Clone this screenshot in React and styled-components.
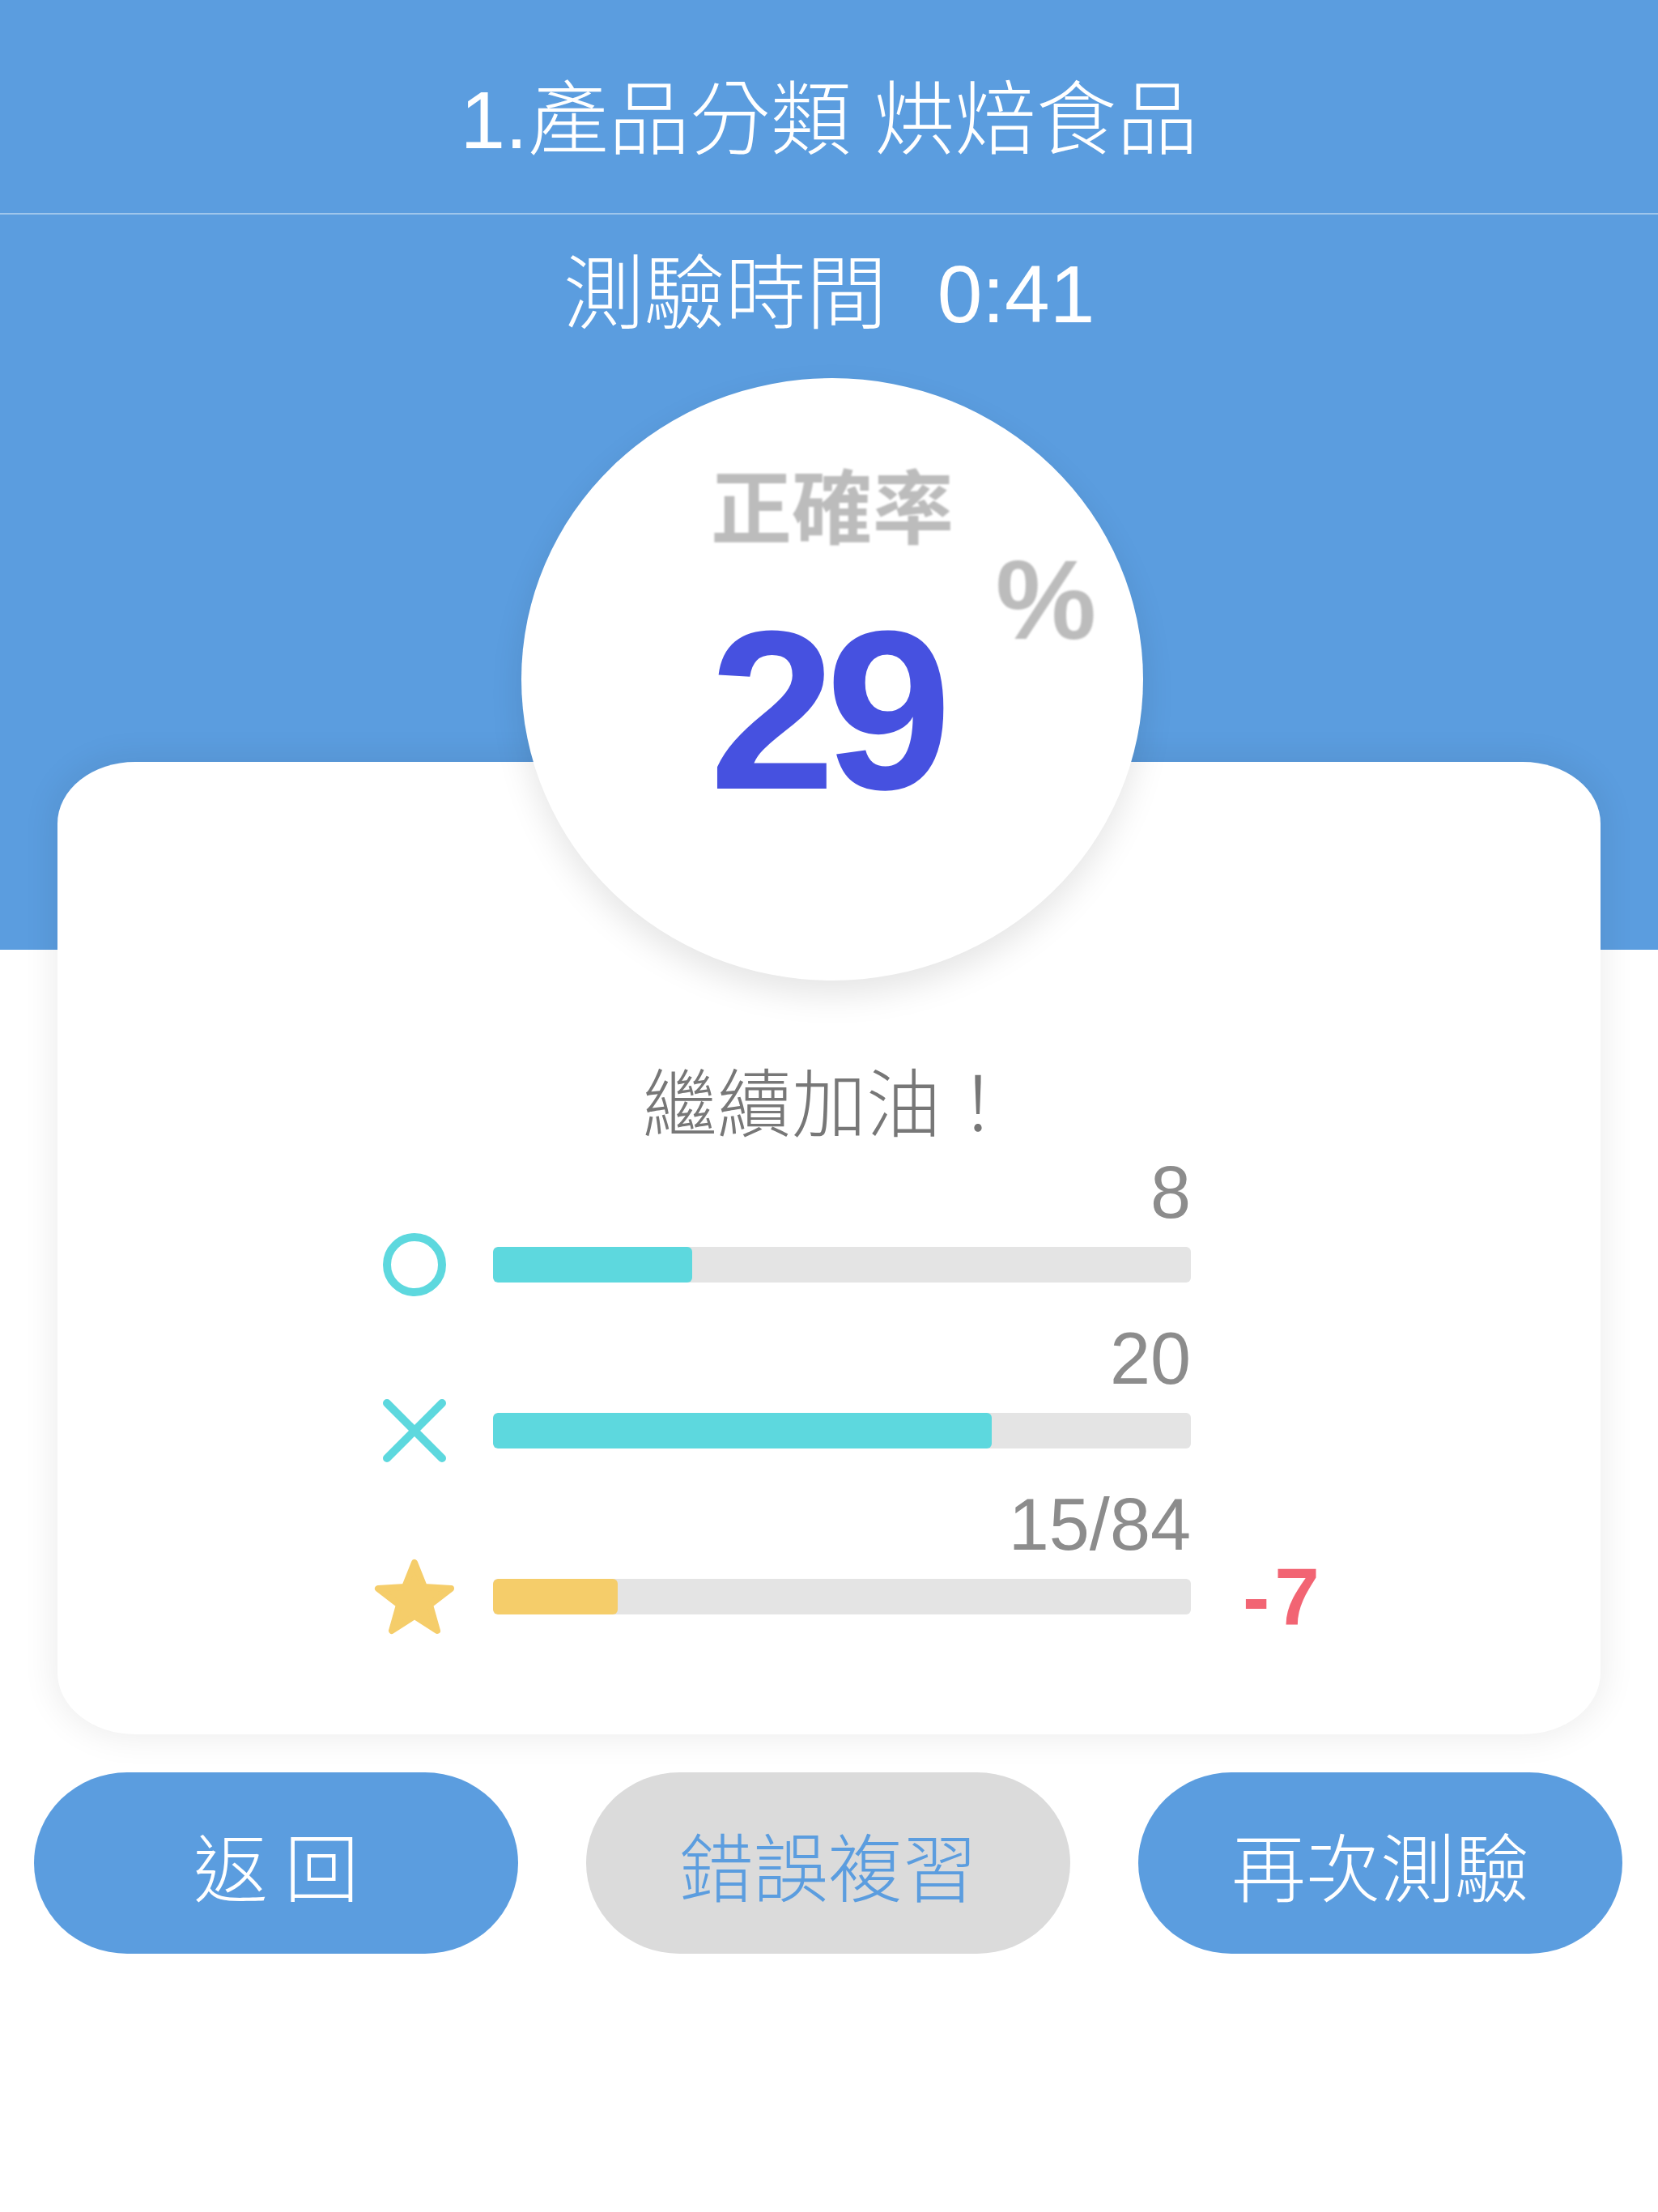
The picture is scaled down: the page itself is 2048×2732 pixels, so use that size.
import styled, { createGlobalStyle } from 'styled-components';

const BLUE = '#5b9ddf';
const CYAN = '#5dd8de';
const YELLOW = '#f5cd6a';
const CJK = '"Liberation Sans", "Noto Sans CJK TC", sans-serif';

const rows = [
    { key: 'right', icon: 'circle', label: '8', value: 8, total: 28, color: CYAN },
    { key: 'wrong', icon: 'cross', label: '20', value: 20, total: 28, color: CYAN },
    { key: 'star', icon: 'star', label: '15/84', value: 15, total: 84, color: YELLOW, delta: '-7' },
];

function RowIcon({ type }) {
    if (type === 'circle') {
        return (
            <svg width='80' height='80' viewBox='0 0 80 80'>
                <circle cx='40' cy='40' r='34' fill='none' stroke={CYAN} strokeWidth='10' />
            </svg>
        );
    }
    if (type === 'cross') {
        return (
            <svg width='80' height='80' viewBox='0 0 80 80'>
                <path d='M6 6 L74 74 M74 6 L6 74' stroke={CYAN} strokeWidth='10' strokeLinecap='round' />
            </svg>
        );
    }
    return (
        <svg width='102' height='96' viewBox='0 0 102 96'>
            <polygon
                points='51,6 63,36 96,38 70,58 79,90 51,72 23,90 32,58 6,38 39,36'
                fill={YELLOW}
                stroke={YELLOW}
                strokeWidth='8'
                strokeLinejoin='round'
            />
        </svg>
    );
}

function App() {
    return (
        <>
            <GlobalStyle />
            <Page>
                <Header>
                    <Title>1.產品分類 烘焙食品</Title>
                    <Divider />
                    <Timer>
                        <span>測驗時間</span>
                        <span>0:41</span>
                    </Timer>
                    <ScoreCircle>
                        <ScoreLabel>正確率</ScoreLabel>
                        <ScoreValue>
                            29
                            <Percent>%</Percent>
                        </ScoreValue>
                    </ScoreCircle>
                </Header>

                <Card>
                    <Cheer>繼續加油！</Cheer>
                    <Stats>
                        {rows.map((row) => (
                            <StatRow key={row.key}>
                                <Count>{row.label}</Count>
                                <IconCell>
                                    <RowIcon type={row.icon} />
                                </IconCell>
                                <Track>
                                    <Fill
                                        $color={row.color}
                                        style={{ width: `${(row.value / row.total) * 100}%` }}
                                    />
                                </Track>
                                <Delta>{row.delta}</Delta>
                            </StatRow>
                        ))}
                    </Stats>
                </Card>

                <Actions>
                    <ActionButton>返 回</ActionButton>
                    <ActionButton $muted>錯誤複習</ActionButton>
                    <ActionButton>再次測驗</ActionButton>
                </Actions>
            </Page>
        </>
    );
}

const GlobalStyle = createGlobalStyle`
    html, body {
        margin: 0;
        padding: 0;
        background: #ffffff;
    }
    body {
        font-family: ${CJK};
    }
`;

const Page = styled.div`
    width: 2048px;
    min-height: 2732px;
    background: #ffffff;
`;

const Header = styled.header`
    height: 1173px;
    background: ${BLUE};
    display: flex;
    flex-direction: column;
    align-items: center;

    & > * {
        flex-shrink: 0;
    }
`;

const Title = styled.h1`
    margin: 0;
    align-self: stretch;
    height: 263px;
    padding-top: 16px;
    box-sizing: border-box;
    display: flex;
    align-items: center;
    justify-content: center;
    color: #ffffff;
    font-size: 100px;
    font-weight: 300;
`;

const Divider = styled.div`
    align-self: stretch;
    height: 2px;
    background: rgba(255, 255, 255, 0.42);
`;

const Timer = styled.div`
    display: flex;
    justify-content: center;
    gap: 62px;
    height: 196px;
    line-height: 196px;
    color: #ffffff;
    font-size: 100px;
    font-weight: 300;
`;

const ScoreCircle = styled.div`
    position: relative;
    z-index: 2;
    margin-top: 6px;
    margin-left: 8px;
    width: 768px;
    height: 744px;
    border-radius: 50%;
    background: #ffffff;
    box-shadow: 0 18px 40px rgba(0, 0, 0, 0.1);
    display: flex;
    flex-direction: column;
    align-items: center;
`;

const ScoreLabel = styled.div`
    margin-top: 104px;
    font-family: "Noto Sans CJK TC", sans-serif;
    font-size: 100px;
    line-height: 100px;
    font-weight: 700;
    color: #bcbcbc;
    filter: blur(0.8px);
`;

const ScoreValue = styled.div`
    position: relative;
    margin-top: 66px;
    margin-left: -16px;
    font-family: "Liberation Sans", Arial, sans-serif;
    font-size: 280px;
    line-height: 1;
    font-weight: 700;
    letter-spacing: -12px;
    color: #4651e0;
`;

const Percent = styled.span`
    position: absolute;
    left: calc(100% + 66px);
    top: -66px;
    font-size: 140px;
    letter-spacing: 0;
    color: #bcbcbc;
    filter: blur(0.8px);
`;

const Card = styled.section`
    margin: -232px 71px 0;
    height: 1201px;
    box-sizing: border-box;
    padding-top: 370px;
    background: #ffffff;
    border-radius: 96px / 76px;
    box-shadow: 0 0 40px 6px rgba(0, 0, 0, 0.07);
`;

const Cheer = styled.div`
    text-align: center;
    font-family: "Noto Sans CJK TC", sans-serif;
    font-size: 92px;
    line-height: 92px;
    font-weight: 300;
    color: #777777;
`;

const Stats = styled.div`
    margin: 25px 0 0 390px;
    display: flex;
    flex-direction: column;
    gap: 49px;
`;

const StatRow = styled.div`
    display: grid;
    grid-template-columns: 102px 862px auto;
    grid-template-rows: 90px 44px;
    grid-template-areas:
        '. count .'
        'icon bar delta';
    column-gap: 46px;
    row-gap: 22px;
`;

const Count = styled.div`
    grid-area: count;
    text-align: right;
    font-family: "Liberation Sans", Arial, sans-serif;
    font-size: 90px;
    line-height: 90px;
    color: #8c8c8c;
`;

const IconCell = styled.div`
    grid-area: icon;
    display: flex;
    align-items: center;
    justify-content: center;
    height: 44px;
    svg {
        flex-shrink: 0;
    }
`;

const Track = styled.div`
    grid-area: bar;
    height: 44px;
    border-radius: 6px;
    background: #e4e4e4;
    overflow: hidden;
`;

const Fill = styled.div`
    height: 100%;
    border-radius: 6px;
    background: ${(p) => p.$color};
`;

const Delta = styled.div`
    grid-area: delta;
    align-self: center;
    margin-left: 18px;
    font-family: "Liberation Sans", Arial, sans-serif;
    font-size: 100px;
    line-height: 44px;
    font-weight: 700;
    letter-spacing: 6px;
    color: #f26473;
`;

const Actions = styled.div`
    display: flex;
    justify-content: space-between;
    padding: 47px 44px 0 42px;
`;

const ActionButton = styled.button`
    width: 598px;
    height: 224px;
    border: none;
    border-radius: 115px / 112px;
    background: ${(p) => (p.$muted ? '#dbdbdb' : BLUE)};
    color: ${(p) => (p.$muted ? BLUE : '#ffffff')};
    font-family: "Noto Sans CJK TC", sans-serif;
    font-size: 92px;
    font-weight: 300;
    cursor: pointer;
`;

export default App;
